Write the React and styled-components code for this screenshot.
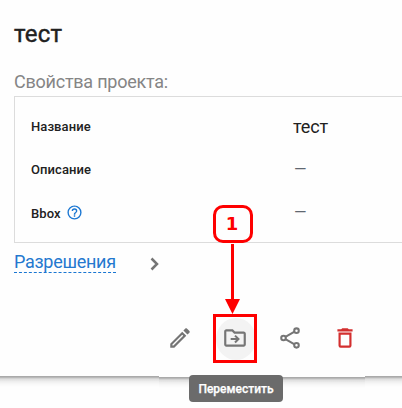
import React from "react";
import styled, { createGlobalStyle } from "styled-components";

const GlobalStyle = createGlobalStyle`
  body { margin: 0; background: #fff; overflow: hidden; }
  * { box-sizing: border-box; }
`;

const Page = styled.main`
  position: relative;
  width: 402px;
  height: 408px;
  overflow: hidden;
  background: #fefefe;
  font-family: Roboto, sans-serif;
  color: #212121;
`;

const Dialog = styled.section`
  display: flex;
  flex-direction: column;
  height: 377px;
  padding: 18px 0 0 14px;
  background: #fefefe;
`;

const Title = styled.h1`
  margin: 0;
  font-size: 24px;
  line-height: 32px;
  font-weight: 400;
  letter-spacing: 0.2px;
  -webkit-text-stroke: 0.4px currentColor;
`;

const Subtitle = styled.div`
  margin-top: 20px;
  height: 26px;
  font-size: 18px;
  line-height: 24px;
  letter-spacing: -0.24px;
  color: #858585;
`;

const Properties = styled.dl`
  display: grid;
  grid-template-columns: 262px 1fr;
  grid-template-rows: 43px 43px 44px;
  align-items: center;
  margin: 0;
  height: 147px;
  padding: 8px 0 0 16px;
  border: 1px solid #dcdcdc;
  border-right: 0;
`;

const Label = styled.dt`
  display: flex;
  align-items: center;
  gap: 6px;
  font-size: 13px;
  font-weight: 500;
  letter-spacing: 0.08px;
`;

const Value = styled.dd`
  margin: 0;
  font-size: 18px;
  line-height: 24px;
  letter-spacing: -0.15px;
`;

const EmptyValue = styled(Value)`
  margin: 0 0 0 1px;
  font-size: 16px;
  color: #5f6770;
`;

const Permissions = styled.div`
  display: flex;
  align-items: flex-start;
  gap: 34px;
  margin-top: 7px;
`;

const Link = styled.a`
  width: 102px;
  height: 23px;
  font-size: 18px;
  line-height: 24px;
  letter-spacing: -0.28px;
  color: #2478cf;
  border-bottom: 1px dashed #1976d2;
`;

const Chevron = styled.svg`
  width: 10px;
  height: 14px;
  margin-top: 7px;
`;

const Actions = styled.div`
  display: flex;
  gap: 19px;
  margin: 41px 0 0 148px;
`;

const ActionButton = styled.button`
  display: grid;
  place-items: center;
  width: 36px;
  height: 48px;
  padding: 0;
  border: 0;
  background: none;
  color: ${({ $danger }) => ($danger ? "#d32f2f" : "#757575")};
`;

const Halo = styled.span`
  display: grid;
  place-items: center;
  flex: none;
  width: 40px;
  height: 42px;
  padding: 0 2px 1px 0;
  border-radius: 50%;
  background: #f3f3f3;
`;

const Highlight = styled(ActionButton)`
  width: 44px;
  height: 49px;
  margin: 0 -4px;
  border: 3px solid #fe0000;
  overflow: hidden;
`;

const Icon = styled.svg`
  display: block;
  width: 26px;
  height: 26px;
  fill: currentColor;
`;

const HelpIcon = styled.svg`
  width: 17px;
  height: 17px;
  fill: #1976d2;
  margin: -2px 0 0 -0.5px;
`;

const Edge = styled.div`
  display: grid;
  grid-template-columns: 159px 206px 37px;
  height: 12px;
  margin-top: -1px;
`;

const Shade = styled.span`
  height: 11px;
  margin-top: ${({ $drop }) => $drop || 0}px;
  background: linear-gradient(#aaa 0 1px, #b9b9b9 1px 2px, #d2d2d2 2px 3px, #e1e1e1 3px 4px, #ececec 5px, #f8f8f8 8px, #fefefe 11px);
`;

const Tooltip = styled.div`
  position: absolute;
  left: 189px;
  top: 375px;
  width: 94px;
  height: 27px;
  border-radius: 4px;
  background: #6b6b6b;
  color: #fff;
  font-size: 12px;
  line-height: 28px;
  font-weight: 500;
  text-align: center;
  -webkit-text-stroke: 0.25px currentColor;
`;

const Marker = styled.div`
  position: absolute;
  left: 213px;
  top: 205px;
  width: 40px;
  height: 38px;
  padding-right: 2px;
  border: 3px solid #fe0000;
  border-radius: 10px;
  background: #fefefe;
  color: #fe0000;
  font: bold 18px/31px "DejaVu Sans", sans-serif;
  text-align: center;
`;

const Arrow = styled.svg`
  position: absolute;
  left: 225px;
  top: 244px;
  width: 15px;
  height: 70px;
  fill: #fe0000;
`;

const paths = {
  edit: "M14.06,9L15,9.94L5.92,19H5V18.08L14.06,9M17.66,3C17.41,3 17.15,3.1 16.96,3.29L15.13,5.12L18.88,8.87L20.71,7.04C21.1,6.65 21.1,6 20.71,5.63L18.37,3.29C18.17,3.09 17.92,3 17.66,3M14.06,6.19L3,17.25V21H6.75L17.81,9.94L14.06,6.19Z",
  folder: "M20 6h-8l-2-2H4c-1.1 0-2 .9-2 2v12c0 1.1.9 2 2 2h16c1.1 0 2-.9 2-2V8c0-1.1-.9-2-2-2zm0 12H4V6h5.17l2 2H20v10z",
  remove: "M6,19A2,2 0 0,0 8,21H16A2,2 0 0,0 18,19V7H6V19M8,9H16V19H8V9M15.5,4L14.5,3H9.5L8.5,4H5V6H19V4H15.5Z",
  help: "M11,18H13V16H11V18M12,2A10,10 0 0,0 2,12A10,10 0 0,0 12,22A10,10 0 0,0 22,12A10,10 0 0,0 12,2M12,20C7.59,20 4,16.41 4,12C4,7.59 7.59,4 12,4C16.41,4 20,7.59 20,12C20,16.41 16.41,20 12,20M12,6A4,4 0 0,0 8,10H10A2,2 0 0,1 12,8A2,2 0 0,1 14,10C14,12 11,11.75 11,15H13C13,12.75 16,12.5 16,10A4,4 0 0,0 12,6Z",
};

export default function App() {
  return (
    <Page>
      <GlobalStyle />
      <Dialog>
        <Title>тест</Title>
        <Subtitle>Свойства проекта:</Subtitle>
        <Properties>
          <Label>Название</Label>
          <Value>тест</Value>
          <Label>Описание</Label>
          <EmptyValue>—</EmptyValue>
          <Label>
            Bbox
            <HelpIcon viewBox="0 0 24 24"><path d={paths.help} /></HelpIcon>
          </Label>
          <EmptyValue>—</EmptyValue>
        </Properties>
        <Permissions>
          <Link>Разрешения</Link>
          <Chevron viewBox="0 0 10 14">
            <path d="M1.5 1.5 7 7 1.5 12.5" fill="none" stroke="#757575" strokeWidth="2.5" />
          </Chevron>
        </Permissions>
        <Actions>
          <ActionButton aria-label="Изменить">
            <Icon viewBox="0 0 24 24"><path d={paths.edit} /></Icon>
          </ActionButton>
          <Highlight aria-label="Переместить">
            <Halo>
              <Icon viewBox="0 0 24 24">
                <path d={paths.folder} />
                <path d="M8 13h7M12 9.8l3.2 3.2-3.2 3.2" fill="none" stroke="currentColor" strokeWidth="1.9" />
              </Icon>
            </Halo>
          </Highlight>
          <ActionButton aria-label="Поделиться">
            <Icon viewBox="0 0 24 24">
              <g fill="none" stroke="currentColor" strokeWidth="1.9">
                <circle cx="18" cy="5.2" r="2.1" />
                <circle cx="6" cy="12" r="2.1" />
                <circle cx="18" cy="18.8" r="2.1" />
                <path d="m7.8 10.9 8.4-4.8M7.8 13.1l8.4 4.8" />
              </g>
            </Icon>
          </ActionButton>
          <ActionButton aria-label="Удалить" $danger>
            <Icon viewBox="0 0 24 24"><path d={paths.remove} /></Icon>
          </ActionButton>
        </Actions>
      </Dialog>
      <Edge>
        <Shade />
        <Shade $drop={1} />
        <Shade />
      </Edge>
      <Arrow viewBox="0 0 15 70">
        <path d="M6 0h3v55h6L7.5 70 0 55h6z" />
      </Arrow>
      <Marker>1</Marker>
      <Tooltip>Переместить</Tooltip>
    </Page>
  );
}
